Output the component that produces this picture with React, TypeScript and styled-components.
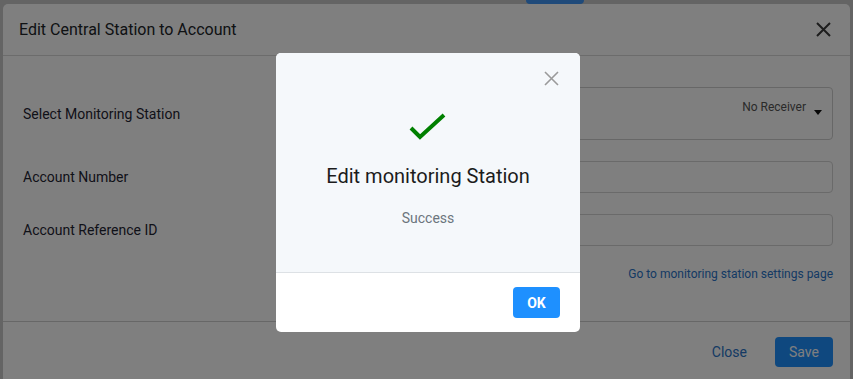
import styled, { createGlobalStyle } from "styled-components";

const GlobalStyle = createGlobalStyle`
  html, body {
    margin: 0;
    padding: 0;
    height: 100%;
    overflow: hidden;
  }
  body {
    font-family: Roboto, "Liberation Sans", Arial, sans-serif;
    background: #c8c8c8;
  }
`;

const Page = styled.div`
  position: relative;
  height: 379px;
  background: #c8c8c8;
  overflow: hidden;
`;

const PageToolbar = styled.div`
  display: flex;
  padding-left: 526px;
  margin-top: -26px;
`;

const PageButton = styled.div`
  width: 58px;
  height: 30px;
  border-radius: 4px;
  background: #3e94f4;
`;

const Modal = styled.div`
  position: absolute;
  top: 4px;
  left: 3px;
  right: 3px;
  height: 400px;
  background: #ffffff;
  border-radius: 5px 5px 0 0;
  display: flex;
  flex-direction: column;
`;

const ModalHeader = styled.div`
  display: flex;
  align-items: center;
  justify-content: space-between;
  height: 52px;
  padding: 0 19px 0 16px;
  border-bottom: 1px solid #d8d8d8;
  box-sizing: border-box;
`;

const ModalTitle = styled.h5`
  margin: 0;
  font-size: 16px;
  font-weight: 400;
  color: #212529;
`;

const IconButton = styled.div`
  display: flex;
  align-items: center;
  justify-content: center;
  width: 16px;
  height: 16px;
`;

const ModalBody = styled.div`
  display: flex;
  flex-direction: column;
  gap: 21px;
  padding: 31px 17px 0 20px;
  height: 233px;
  box-sizing: border-box;
`;

const FormRow = styled.div`
  display: grid;
  grid-template-columns: 267px 1fr;
  align-items: center;
`;

const Label = styled.div`
  font-size: 14px;
  color: #1f2433;
`;

const SelectBox = styled.div`
  height: 53px;
  box-sizing: border-box;
  border: 1px solid #cecece;
  border-radius: 4px;
  display: flex;
  justify-content: flex-end;
  align-items: flex-start;
  gap: 8px;
  padding: 12px 10px 0 0;
  font-size: 12px;
  color: #555;
`;

const Caret = styled.span`
  width: 0;
  height: 0;
  margin-top: 10px;
  border-left: 4px solid transparent;
  border-right: 4px solid transparent;
  border-top: 5px solid #111;
`;

const TextInput = styled.div`
  height: 32px;
  box-sizing: border-box;
  border: 1px solid #d4d4d4;
  border-radius: 4px;
`;

const LinkRow = styled.div`
  display: flex;
  justify-content: flex-end;
  margin-top: 0;
`;

const SettingsLink = styled.a`
  font-size: 12px;
  color: #2a74c8;
  text-decoration: none;
`;

const ModalFooter = styled.div`
  display: flex;
  justify-content: flex-end;
  align-items: center;
  gap: 28px;
  height: 60px;
  margin-top: 32px;
  padding: 0 17px 0 0;
  border-top: 1px solid #cfcfcf;
  box-sizing: border-box;
`;

const LinkButton = styled.div`
  font-size: 14px;
  color: #2a74c8;
`;

const PrimaryButton = styled.div<{ $w: number; $h: number; $bold?: boolean }>`
  display: flex;
  align-items: center;
  justify-content: center;
  width: ${({ $w }) => $w}px;
  height: ${({ $h }) => $h}px;
  border-radius: 4px;
  background: #1e90ff;
  color: #ffffff;
  font-size: 14px;
  font-weight: ${({ $bold }) => ($bold ? 700 : 400)};
`;

const Backdrop = styled.div`
  position: absolute;
  inset: 0;
  background: rgba(0, 0, 0, 0.5);
`;

const Popup = styled.div`
  position: absolute;
  top: 53px;
  left: 276px;
  width: 304px;
  height: 279px;
  border-radius: 5px;
  overflow: hidden;
  background: #ffffff;
  display: flex;
  flex-direction: column;
`;

const PopupBody = styled.div`
  height: 219px;
  background: #f5f8fb;
  border-bottom: 1px solid #dde1e5;
  display: flex;
  flex-direction: column;
  align-items: center;
`;

const PopupClose = styled.div`
  align-self: flex-end;
  display: flex;
  margin: 18px 21px 0 0;
`;

const CheckWrap = styled.div`
  margin-top: 27px;
  display: flex;
`;

const PopupTitle = styled.div`
  margin-top: 23px;
  font-size: 20px;
  color: #1c1c1c;
`;

const PopupText = styled.div`
  margin-top: 22px;
  font-size: 14px;
  color: #6c757d;
`;

const PopupFooter = styled.div`
  flex: 1;
  display: flex;
  justify-content: flex-end;
  align-items: center;
  padding-right: 20px;
`;

function CloseIcon({ size, color, width }: { size: number; color: string; width: number }) {
  return (
    <svg width={size} height={size} viewBox={`0 0 ${size} ${size}`}>
      <path
        d={`M1 1 L${size - 1} ${size - 1} M${size - 1} 1 L1 ${size - 1}`}
        stroke={color}
        strokeWidth={width}
        fill="none"
      />
    </svg>
  );
}

export default function App() {
  return (
    <>
      <GlobalStyle />
      <Page>
        <PageToolbar>
          <PageButton />
        </PageToolbar>
        <Modal>
          <ModalHeader>
            <ModalTitle>Edit Central Station to Account</ModalTitle>
            <IconButton>
              <CloseIcon size={15} color="#3a3a3a" width={2} />
            </IconButton>
          </ModalHeader>
          <ModalBody>
            <FormRow>
              <Label>Select Monitoring Station</Label>
              <SelectBox>
                <span>No Receiver</span>
                <Caret />
              </SelectBox>
            </FormRow>
            <FormRow>
              <Label>Account Number</Label>
              <TextInput />
            </FormRow>
            <FormRow>
              <Label>Account Reference ID</Label>
              <TextInput />
            </FormRow>
            <LinkRow>
              <SettingsLink>Go to monitoring station settings page</SettingsLink>
            </LinkRow>
          </ModalBody>
          <ModalFooter>
            <LinkButton>Close</LinkButton>
            <PrimaryButton $w={58} $h={30}>Save</PrimaryButton>
          </ModalFooter>
        </Modal>
        <Backdrop />
        <Popup>
          <PopupBody>
            <PopupClose>
              <CloseIcon size={15} color="#9a9a9a" width={1.6} />
            </PopupClose>
            <CheckWrap>
              <svg width="38" height="28" viewBox="0 0 38 28">
                <polyline
                  points="2,15 11,24 35,2"
                  stroke="#008000"
                  strokeWidth="4"
                  fill="none"
                />
              </svg>
            </CheckWrap>
            <PopupTitle>Edit monitoring Station</PopupTitle>
            <PopupText>Success</PopupText>
          </PopupBody>
          <PopupFooter>
            <PrimaryButton $w={47} $h={31} $bold>OK</PrimaryButton>
          </PopupFooter>
        </Popup>
      </Page>
    </>
  );
}
